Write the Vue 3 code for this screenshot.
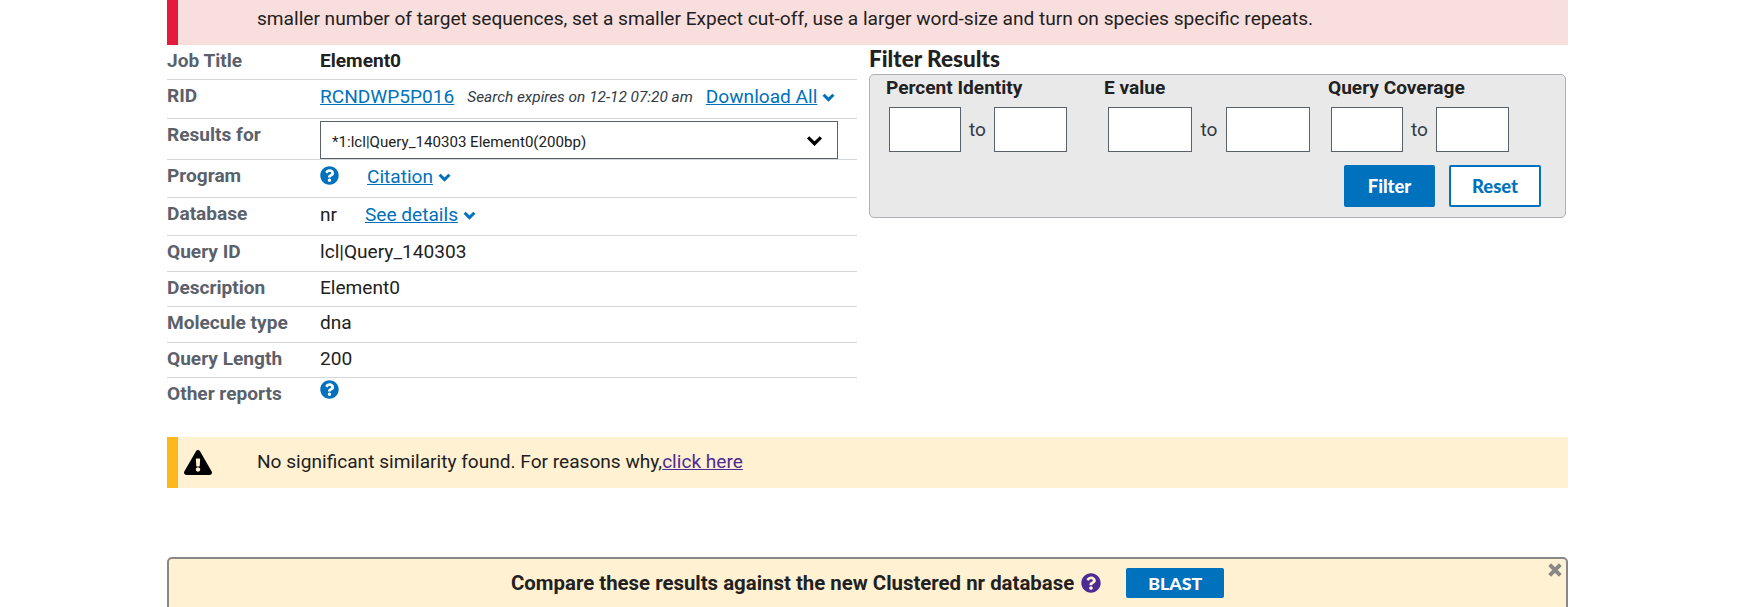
<script setup>
const helpPath = 'M504 256c0 136.997-111.043 248-248 248S8 392.997 8 256C8 119.083 119.043 8 256 8s248 111.083 248 248zM262.655 90c-54.497 0-89.255 22.957-116.549 63.758-3.536 5.286-2.353 12.415 2.715 16.258l34.699 26.31c5.205 3.947 12.621 3.008 16.665-2.122 17.864-22.658 30.113-35.797 57.303-35.797 20.429 0 45.698 13.148 45.698 32.958 0 14.976-12.363 22.667-32.534 33.976C247.128 238.528 216 254.941 216 296v4c0 6.627 5.373 12 12 12h56c6.627 0 12-5.373 12-12v-1.333c0-28.462 83.186-29.647 83.186-106.667 0-58.002-60.165-102-116.531-102zM256 338c-25.365 0-46 20.635-46 46 0 25.364 20.635 46 46 46s46-20.636 46-46c0-25.365-20.635-46-46-46z'
const warnPath = 'M569.517 440.013C587.975 472.007 564.806 512 527.94 512H48.054c-36.937 0-59.999-40.055-41.577-71.987L246.423 24.035c18.467-32.009 64.72-31.951 83.154 0l239.94 416.016zM288 354c-25.405 0-46 20.595-46 46s20.595 46 46 46 46-20.595 46-46-20.595-46-46-46zm-43.673-165.346l7.418 136c.347 6.364 5.609 11.346 11.982 11.346h48.546c6.373 0 11.635-4.982 11.982-11.346l7.418-136c.375-6.874-5.098-12.654-11.982-12.654h-63.383c-6.884 0-12.356 5.78-11.981 12.654z'

const filters = [
  { label: 'Percent Identity', size: 'narrow' },
  { label: 'E value', size: 'wide' },
  { label: 'Query Coverage', size: 'narrow' }
]
</script>

<template>
  <div class="page">
    <div class="alert alert-error">
      <p>smaller number of target sequences, set a smaller Expect cut-off, use a larger word-size and turn on species specific repeats.</p>
    </div>

    <div class="columns">
      <div class="summary">
        <div class="row">
          <span class="label">Job Title</span>
          <strong class="title-value">Element0</strong>
        </div>
        <div class="row">
          <span class="label">RID</span>
          <div class="value">
            <a href="#" class="link">RCNDWP5P016</a>
            <em class="expires">Search expires on 12-12 07:20 am</em>
            <a href="#" class="link download">Download All</a>
            <svg class="chevron" viewBox="0 0 12 8"><path d="M1.5 1.5 6 6l4.5-4.5" /></svg>
          </div>
        </div>
        <div class="row">
          <span class="label">Results for</span>
          <div class="select-box">
            <span class="select-text">*1:lcl|Query_140303 Element0(200bp)</span>
            <svg class="select-chevron" viewBox="0 0 16 10"><path d="M2 2l6 6 6-6" /></svg>
          </div>
        </div>
        <div class="row">
          <span class="label">Program</span>
          <div class="value">
            <svg class="help help-up" viewBox="0 0 512 512"><path :d="helpPath" /></svg>
            <a href="#" class="link citation">Citation</a>
            <svg class="chevron" viewBox="0 0 12 8"><path d="M1.5 1.5 6 6l4.5-4.5" /></svg>
          </div>
        </div>
        <div class="row">
          <span class="label">Database</span>
          <div class="value">
            <span>nr</span>
            <a href="#" class="link details">See details</a>
            <svg class="chevron" viewBox="0 0 12 8"><path d="M1.5 1.5 6 6l4.5-4.5" /></svg>
          </div>
        </div>
        <div class="row">
          <span class="label">Query ID</span>
          <span>lcl|Query_140303</span>
        </div>
        <div class="row">
          <span class="label">Description</span>
          <span>Element0</span>
        </div>
        <div class="row">
          <span class="label">Molecule type</span>
          <span>dna</span>
        </div>
        <div class="row">
          <span class="label">Query Length</span>
          <span>200</span>
        </div>
        <div class="row">
          <span class="label">Other reports</span>
          <svg class="help help-top" viewBox="0 0 512 512"><path :d="helpPath" /></svg>
        </div>
      </div>

      <div class="filter">
        <h3 class="filter-title">Filter Results</h3>
        <form class="filter-box" @submit.prevent>
          <div class="filter-groups">
            <div v-for="f in filters" :key="f.label" class="filter-group" :class="f.size">
              <label>{{ f.label }}</label>
              <div class="range">
                <input type="text" />
                <span>to</span>
                <input type="text" />
              </div>
            </div>
          </div>
          <div class="filter-actions">
            <button type="submit" class="btn btn-primary">Filter</button>
            <button type="reset" class="btn btn-outline">Reset</button>
          </div>
        </form>
      </div>
    </div>

    <div class="alert alert-warning">
      <svg class="warn-icon" viewBox="0 0 576 512"><path :d="warnPath" /></svg>
      <p>No significant similarity found. For reasons why,<a href="#" class="visited">click here</a></p>
    </div>

    <div class="compare">
      <strong>Compare these results against the new Clustered nr database</strong>
      <svg class="help help-purple" viewBox="0 0 512 512"><path :d="helpPath" /></svg>
      <a href="#" class="blast">BLAST</a>
      <svg class="close" viewBox="0 0 12 12"><path d="M2 2l8 8M10 2l-8 8" /></svg>
    </div>
  </div>
</template>

<style scoped>
.page {
  width: 1401px;
  margin-left: 167px;
  font-family: Roboto, "Liberation Sans", sans-serif;
  font-size: 19.1px;
  line-height: 24px;
  color: #212121;
}

.alert {
  position: relative;
  display: flex;
  align-items: center;
  padding-left: 90px;
}

.alert p {
  margin: 0;
}

.alert-error {
  height: 45px;
  align-items: flex-start;
  padding-top: 7px;
  box-sizing: border-box;
  background: #f9dede;
  border-left: 11px solid #e31c3d;
  padding-left: 79px;
}

.alert-warning {
  height: 51px;
  margin-top: 30px;
  padding-bottom: 1px;
  box-sizing: border-box;
  background: #fff1d2;
  border-left: 11px solid #fdb81e;
  padding-left: 79px;
}

.warn-icon {
  position: absolute;
  left: 6px;
  top: 13px;
  width: 28px;
  height: 25px;
  fill: #000;
}

.visited {
  color: #4c2c92;
}

.columns {
  display: flex;
  gap: 12px;
}

.summary {
  width: 690px;
  display: grid;
  grid-template-rows: 35px 39px 41px 38px 38px 36px 35px 36px 35px 29px;
}

.row {
  display: flex;
  align-items: flex-start;
  box-sizing: border-box;
  padding-top: 4px;
  border-bottom: 1px solid #d6d7d9;
}

.row:last-child {
  border-bottom: 0;
}

.label {
  width: 153px;
  flex: none;
  font-weight: 700;
  color: #5b616b;
}

.title-value {
  font-weight: 700;
}

.value {
  display: flex;
  align-items: center;
  height: 28px;
  margin-top: -1px;
}

.link {
  color: #0071bc;
}

.expires {
  margin-left: 13px;
  font-size: 15.4px;
  color: #323a45;
}

.download {
  margin-left: 13px;
}

.citation {
  margin-left: 28px;
}

.details {
  margin-left: 28px;
}

.chevron {
  width: 13px;
  height: 9px;
  margin-left: 5px;
  fill: none;
  stroke: #0071bc;
  stroke-width: 2.8;
}

.help {
  width: 19px;
  height: 19px;
  fill: #0071bc;
}

.help-up {
  margin-top: -4px;
}

.help-top {
  margin-top: -2px;
}

.select-box {
  flex: none;
  display: flex;
  align-items: center;
  justify-content: space-between;
  width: 518px;
  height: 38px;
  margin-top: -2px;
  padding: 0 14px 0 11px;
  box-sizing: border-box;
  border: 1px solid #5b616b;
  background: #fff;
  font-size: 15.1px;
}

.select-text {
  padding-top: 3px;
}

.select-chevron {
  width: 17px;
  height: 11px;
  fill: none;
  stroke: #000;
  stroke-width: 3;
}

.filter {
  width: 697px;
}

.filter-title {
  margin: 0;
  height: 29px;
  font-family: Lato, sans-serif;
  font-size: 22.5px;
  line-height: 27px;
  font-weight: 900;
}

.filter-box {
  box-sizing: border-box;
  height: 144px;
  padding: 1px 0 0 16px;
  background: #e9e9e9;
  border: 1px solid #aeb0b5;
  border-radius: 5px;
}

.filter-groups {
  display: flex;
}

.filter-group label {
  display: block;
  font-weight: 700;
  margin-bottom: 7px;
  line-height: 24px;
}

.filter-group.narrow:first-child {
  width: 219px;
}

.filter-group.wide {
  width: 223px;
}

.wide label {
  margin-left: -1px;
}

.range {
  display: flex;
  align-items: center;
  margin-left: 3px;
  color: #323a45;
}

.range input {
  width: 72px;
  height: 45px;
  box-sizing: border-box;
  border: 1px solid #5b616b;
  background: #fff;
  padding: 0;
  margin: 0;
}

.range input:last-child {
  width: 73px;
}

.range span {
  width: 33px;
  text-align: center;
}

.wide .range input {
  width: 84px;
}

.wide .range span {
  width: 34px;
}

.filter-actions {
  display: flex;
  justify-content: flex-end;
  gap: 14px;
  margin-top: 13px;
  padding-right: 24px;
}

.btn {
  width: 91px;
  height: 42px;
  box-sizing: border-box;
  border-radius: 2px;
  font-family: Lato, sans-serif;
  font-size: 18.4px;
  font-weight: 900;
  padding: 0;
}

.btn-primary {
  background: #0071bc;
  border: 0;
  color: #fff;
}

.btn-outline {
  width: 92px;
  background: #fff;
  border: 2px solid #0071bc;
  color: #0071bc;
}

.compare {
  position: relative;
  display: flex;
  align-items: center;
  box-sizing: border-box;
  height: 60px;
  margin-top: 69px;
  padding: 0 0 8px 342px;
  background: #fff1d2;
  border: 2px solid #888;
  border-radius: 5px;
  font-size: 20.4px;
}

.help-purple {
  width: 20px;
  height: 20px;
  margin-left: 7px;
  fill: #4c2c92;
}

.blast {
  display: flex;
  align-items: center;
  justify-content: center;
  width: 98px;
  height: 30px;
  margin-left: 25px;
  border-radius: 2px;
  background: #0071bc;
  color: #fff;
  font-family: Lato, sans-serif;
  font-size: 17.8px;
  font-weight: 900;
  text-decoration: none;
}

.close {
  position: absolute;
  right: 3px;
  top: 3px;
  width: 16px;
  height: 16px;
  fill: none;
  stroke: #888;
  stroke-width: 3;
}
</style>

<style>
html,
body {
  margin: 0;
  overflow: hidden;
  background: #fff;
}
</style>
